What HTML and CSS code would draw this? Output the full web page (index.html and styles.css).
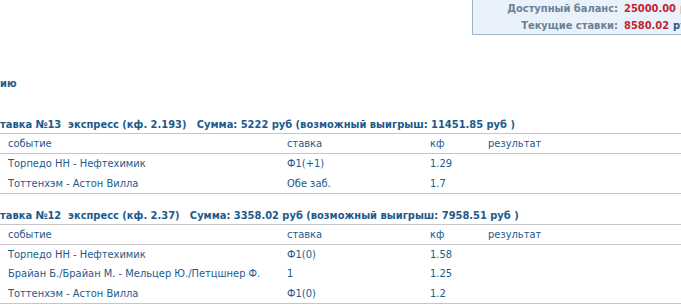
FILE: index.html
```html
<!DOCTYPE html>
<html>
<head>
<meta charset="utf-8">
<link rel="stylesheet" href="styles.css">
</head>
<body>
<div class="page">
  <div class="topbar">
    <div class="balance">
      <div class="bal-row"><span class="bal-label">Доступный баланс:</span> <span class="bal-val">25000.00</span> <span class="cur">руб</span></div>
      <div class="bal-row"><span class="bal-label">Текущие ставки:</span> <span class="bal-val">8580.02</span> <span class="cur">руб</span></div>
    </div>
  </div>
  <div class="section-title">ию</div>

  <div class="bet">
    <div class="bet-title">тавка №13&nbsp; экспресс (кф. 2.193)&nbsp;&nbsp; Сумма: 5222 руб (возможный выигрыш: 11451.85 руб )</div>
    <table class="bet-table">
      <thead>
        <tr><th class="c-ev">событие</th><th class="c-st">ставка</th><th class="c-kf">кф</th><th class="c-res">результат</th></tr>
      </thead>
      <tbody>
        <tr><td class="c-ev">Торпедо НН - Нефтехимик</td><td class="c-st">Ф1(+1)</td><td class="c-kf">1.29</td><td class="c-res"></td></tr>
        <tr><td class="c-ev">Тоттенхэм - Астон Вилла</td><td class="c-st">Обе заб.</td><td class="c-kf">1.7</td><td class="c-res"></td></tr>
      </tbody>
    </table>
  </div>

  <div class="bet">
    <div class="bet-title">тавка №12&nbsp; экспресс (кф. 2.37)&nbsp;&nbsp; Сумма: 3358.02 руб (возможный выигрыш: 7958.51 руб )</div>
    <table class="bet-table">
      <thead>
        <tr><th class="c-ev">событие</th><th class="c-st">ставка</th><th class="c-kf">кф</th><th class="c-res">результат</th></tr>
      </thead>
      <tbody>
        <tr><td class="c-ev">Торпедо НН - Нефтехимик</td><td class="c-st">Ф1(0)</td><td class="c-kf">1.58</td><td class="c-res"></td></tr>
        <tr><td class="c-ev">Брайан Б./Брайан М. - Мельцер Ю./Петцшнер Ф.</td><td class="c-st">1</td><td class="c-kf">1.25</td><td class="c-res"></td></tr>
        <tr><td class="c-ev">Тоттенхэм - Астон Вилла</td><td class="c-st">Ф1(0)</td><td class="c-kf">1.2</td><td class="c-res"></td></tr>
      </tbody>
    </table>
  </div>
</div>
</body>
</html>
```

FILE: styles.css
```css
html, body {
  margin: 0;
  padding: 0;
  background: #ffffff;
  overflow: hidden;
}
.page {
  width: 681px;
  height: 308px;
  overflow: hidden;
  font-family: "DejaVu Sans Condensed", "DejaVu Sans", Verdana, sans-serif;
  font-stretch: condensed;
  font-size: 11px;
  color: #1d5a8c;
}
.topbar {
  display: flex;
  justify-content: flex-start;
  padding-left: 472px;
}
.balance {
  flex: none;
  width: 240px;
  height: 34px;
  background: #e9f2fb;
  border-left: 1px solid #9fb3c7;
  border-bottom: 1px solid #9fb3c7;
}
.bal-row {
  height: 18px;
  line-height: 18px;
  font-weight: bold;
  white-space: nowrap;
  display: flex;
}
.bal-row:first-child {
  height: 17px;
  line-height: 17px;
}
.bal-label {
  color: #6c8196;
  width: 145px;
  text-align: right;
  margin-right: 6px;
}
.bal-val {
  color: #c3242c;
  margin-right: 4px;
}
.cur {
  color: #1d5a8c;
}
.section-title {
  margin-top: 40px;
  height: 17px;
  line-height: 17px;
  font-weight: bold;
  color: #1d5a8c;
}
.bet {
  margin-top: 24px;
}
.bet + .bet {
  margin-top: 13px;
}
.bet-title {
  height: 17px;
  line-height: 18px;
  font-weight: bold;
  color: #1d5a8c;
  white-space: nowrap;
  border-bottom: 1px solid #c6c6c6;
}
.bet-table {
  width: 681px;
  border-collapse: collapse;
  table-layout: fixed;
}
.bet-table th,
.bet-table td {
  height: 19px;
  padding: 0;
  text-align: left;
  font-weight: normal;
  white-space: nowrap;
  color: #1d5a8c;
}
.bet-table thead th {
  border-bottom: 1px solid #c6c6c6;
  height: 19px;
}
.bet-table tbody tr:last-child td {
  height: 20px;
  border-bottom: 1px solid #c6c6c6;
}
.c-ev { width: 279px; padding-left: 8px !important; }
.c-st { width: 143px; }
.c-kf { width: 58px; }
.c-res { width: auto; }
```
